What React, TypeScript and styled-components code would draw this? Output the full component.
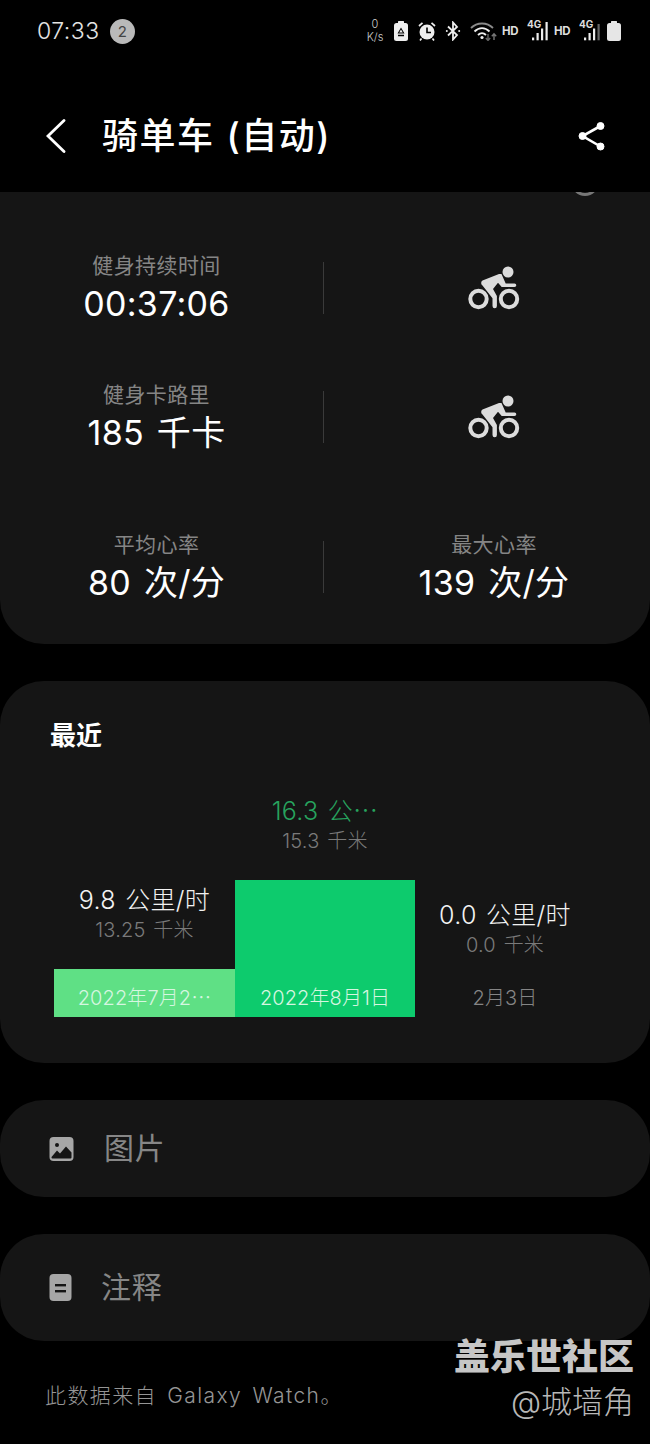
import React from "react";
import styled, { createGlobalStyle } from "styled-components";

const cardColor = "#151515";
const fontStack = `"Inter", "Noto Sans CJK SC", sans-serif`;

const GlobalStyle = createGlobalStyle`
  html, body {
    margin: 0;
    padding: 0;
    background: #000;
  }
  body {
    font-family: ${fontStack};
    color: #fff;
  }
`;

const Page = styled.div`
  position: relative;
  width: 650px;
  height: 1444px;
  overflow: hidden;
  background: #000;
`;

const StatusBar = styled.div`
  height: 60px;
  display: flex;
  align-items: center;
  justify-content: space-between;
  padding: 2px 29px 0 37px;
  box-sizing: border-box;
`;

const StatusLeft = styled.div`
  display: flex;
  align-items: center;
  gap: 10px;
`;

const Clock = styled.span`
  font-size: 23px;
  font-weight: 300;
  color: #e4e4e4;
  letter-spacing: 0.5px;
`;

const Badge = styled.span`
  width: 25px;
  height: 25px;
  border-radius: 50%;
  background: #b9b9b9;
  color: #444;
  font-size: 15px;
  display: flex;
  align-items: center;
  justify-content: center;
`;

const StatusRight = styled.div`
  display: flex;
  align-items: center;
  gap: 7px;
`;

const StatusItem = styled.span<{ $shift?: number }>`
  display: flex;
  align-items: center;
  margin-left: ${(p) => p.$shift ?? 0}px;
`;

const NetSpeed = styled.div`
  width: 20px;
  margin-right: 2px;
  font-size: 11px;
  line-height: 13.5px;
  font-weight: 300;
  text-align: center;
  color: #ccc;
`;

const Hd = styled.span`
  width: 17px;
  font-size: 11.5px;
  font-weight: 700;
  letter-spacing: -0.3px;
  color: #ddd;
`;

const SignalBox = styled.div`
  position: relative;
  width: 21px;
  height: 20px;
`;

const SignalLabel = styled.span`
  position: absolute;
  left: 0;
  top: -2px;
  font-size: 10px;
  line-height: 11px;
  font-weight: 700;
  color: #ddd;
`;

const Header = styled.div`
  height: 132px;
  box-sizing: border-box;
  padding: 19px 44px 0 46px;
  display: flex;
  align-items: center;
`;

const Title = styled.div`
  flex: 1;
  margin-left: 36px;
  font-size: 36px;
  line-height: 50px;
  font-weight: 500;
  letter-spacing: 1.5px;
  word-spacing: 1px;
`;

const StatsCard = styled.section`
  position: relative;
  overflow: hidden;
  background: ${cardColor};
  border-radius: 0 0 44px 44px;
  padding: 58px 0 43px;
  margin-bottom: 37px;
`;

const TopArc = styled.div`
  position: absolute;
  top: -24px;
  right: 51px;
  width: 28px;
  height: 28px;
  box-sizing: border-box;
  border: 3px solid #777;
  border-radius: 50%;
`;

const StatRow = styled.div<{ $gap: number }>`
  display: grid;
  grid-template-columns: 313px 25px 312px;
  align-items: center;
  height: 72px;
  margin-bottom: ${(p) => p.$gap}px;
`;

const Stat = styled.div`
  text-align: center;
`;

const StatLabel = styled.div`
  margin-top: 1px;
  font-size: 21px;
  line-height: 30px;
  letter-spacing: 0.4px;
  color: #858585;
`;

const StatValue = styled.div`
  margin-top: 3px;
  font-size: 34px;
  line-height: 40px;
  letter-spacing: 0.3px;
  word-spacing: 3px;
  color: #fff;
  white-space: nowrap;
`;

const Divider = styled.div`
  width: 1px;
  height: 52px;
  margin: 2px 0 0 10px;
  background: #3a3a3a;
`;

const IconCell = styled.div`
  display: flex;
  justify-content: center;
  margin-top: 2px;
`;

const RecentCard = styled.section`
  background: ${cardColor};
  border-radius: 44px;
  padding: 40px 55px 46px 54px;
  margin-bottom: 37px;
`;

const RecentTitle = styled.div`
  margin: 0 0 45px -4px;
  font-size: 26px;
  line-height: 30px;
  font-weight: 700;
`;

const Chart = styled.div`
  display: grid;
  grid-template-columns: 181px 180px 180px;
  align-items: end;
`;

const Column = styled.div`
  text-align: center;
  white-space: nowrap;
`;

const Speed = styled.div<{ $active?: boolean }>`
  font-size: 25px;
  line-height: 30px;
  font-weight: 300;
  letter-spacing: 0.3px;
  word-spacing: 2px;
  color: ${(p) => (p.$active ? "#27a35e" : "#f2f2f2")};
`;

const Distance = styled.div`
  font-size: 20px;
  line-height: 30px;
  font-weight: 300;
  letter-spacing: 0.2px;
  word-spacing: 2px;
  color: #7a7a7a;
`;

const Bar = styled.div<{ $height: number; $color: string }>`
  height: ${(p) => p.$height}px;
  margin-top: 24px;
  box-sizing: border-box;
  padding-bottom: 5px;
  background: ${(p) => p.$color};
  display: flex;
  align-items: flex-end;
  justify-content: center;
`;

const DateLabel = styled.span<{ $muted?: boolean }>`
  font-size: 20px;
  line-height: 28px;
  font-weight: 300;
  letter-spacing: 0.1px;
  color: ${(p) => (p.$muted ? "#858585" : "#d6f6e0")};
`;

const Pill = styled.section<{ $height: number; $iconGap: number }>`
  height: ${(p) => p.$height}px;
  box-sizing: border-box;
  background: ${cardColor};
  border-radius: 44px;
  margin-bottom: 37px;
  padding-left: 49px;
  display: flex;
  align-items: center;
  gap: ${(p) => p.$iconGap}px;
`;

const PillText = styled.span`
  font-size: 30px;
  line-height: 40px;
  margin-top: -2px;
  color: #868686;
  letter-spacing: 0.8px;
`;

const Footer = styled.div`
  margin-top: 40px;
  padding-left: 45px;
  font-size: 21px;
  line-height: 30px;
  font-weight: 300;
  letter-spacing: 1.4px;
  word-spacing: 3px;
  color: #959595;
`;

const Watermark = styled.div`
  position: absolute;
  right: 16px;
  top: 1335px;
  text-align: right;
  pointer-events: none;
`;

const WatermarkName = styled.div`
  font-size: 36px;
  line-height: 44px;
  font-weight: 900;
  color: #c6c6c6;
`;

const WatermarkUser = styled.div`
  font-size: 31px;
  line-height: 46px;
  font-weight: 300;
  color: #b8b8b8;
`;

const BikeIcon = () => (
  <svg width="52" height="44" viewBox="0 0 52 44" fill="#dcdcdc">
    <circle cx="40" cy="6" r="5.5" />
    <circle cx="10.5" cy="33" r="8.2" fill="none" stroke="#dcdcdc" strokeWidth="4" />
    <circle cx="41" cy="33" r="8.2" fill="none" stroke="#dcdcdc" strokeWidth="4" />
    <path
      d="M14.5 14.5 31 8 33.5 8 37.7 17.5H46.5a1.8 1.8 0 0 1 0 3.6H33.7L30 16.7 25 23 28.9 30V40a2.2 2.2 0 0 1-4.4 0V32.3L14.5 19.5a3 3 0 0 1 0-5Z"
      strokeLinejoin="round"
    />
  </svg>
);

const BackIcon = () => (
  <svg width="20" height="34" viewBox="0 0 20 34" fill="none" stroke="#fff" strokeWidth="2.8" strokeLinecap="round">
    <path d="M18 1.5 2 17 18 32.5" />
  </svg>
);

const ShareIcon = () => (
  <svg width="28" height="30" viewBox="0 0 28 30" fill="#fff" stroke="#fff">
    <circle cx="22.5" cy="5" r="3.5" />
    <circle cx="4.5" cy="15" r="3.5" />
    <circle cx="22.5" cy="25.5" r="3.5" />
    <path d="M22.5 5 4.5 15 22.5 25.5" fill="none" strokeWidth="2.6" />
  </svg>
);

const ImageIcon = () => (
  <svg width="25" height="24" viewBox="0 0 25 24">
    <rect x="0.5" width="24" height="24" rx="4" fill="#a6a6a6" />
    <circle cx="8" cy="8" r="2" fill="#151515" />
    <path d="M2.5 20 8 13.5 11 16.5 17 9.5 22.5 15.5V20.5a1 1 0 0 1-1 1H3.5a1 1 0 0 1-1-1Z" fill="#151515" />
  </svg>
);

const NoteIcon = () => (
  <svg width="23" height="27" viewBox="0 0 23 27">
    <rect width="22" height="27" x="0.5" rx="4" fill="#a6a6a6" />
    <rect x="6" y="10" width="11" height="2.4" fill="#151515" />
    <rect x="6" y="16" width="11" height="2.4" fill="#151515" />
  </svg>
);

const RecycleBatteryIcon = () => (
  <svg width="14" height="20" viewBox="0 0 14 20" fill="#eee">
    <rect x="4" width="6" height="2.5" rx="0.5" />
    <rect y="2" width="14" height="18" rx="2.5" />
    <path d="M7 6.5 10.5 12.5H3.5Z M7 8.5 5.2 11.5H8.8Z" fill="#000" fillRule="evenodd" />
    <path d="M4 14.5H10" stroke="#000" strokeWidth="1.5" />
  </svg>
);

const AlarmIcon = () => (
  <svg width="18" height="20" viewBox="0 0 18 20" fill="none">
    <circle cx="9" cy="11" r="7.5" fill="#eee" />
    <path d="M9 6.5V11.5H13" stroke="#000" strokeWidth="1.6" />
    <path d="M1 5 4.5 1.8M17 5 13.5 1.8M3.5 17.5 2 19.5M14.5 17.5 16 19.5" stroke="#eee" strokeWidth="1.7" />
  </svg>
);

const BluetoothIcon = () => (
  <svg width="16" height="20" viewBox="0 0 16 20" fill="none" stroke="#eee" strokeWidth="1.8">
    <path d="M3 5.5 12 14 8 18.5V1.5L12 6 3 14.5" />
    <circle cx="1.8" cy="10" r="1" fill="#eee" stroke="none" />
    <circle cx="14.2" cy="10" r="1" fill="#eee" stroke="none" />
  </svg>
);

const WifiIcon = () => (
  <svg width="27" height="20" viewBox="0 0 27 20" fill="none">
    <path d="M1 7C7 1 17 1 23 7" stroke="#8a8a8a" strokeWidth="1.8" />
    <path d="M4.5 10.5C9 6 15 6 19.5 10.5" stroke="#eee" strokeWidth="1.8" />
    <path d="M8 14C10.5 11.5 13.5 11.5 16 14" stroke="#eee" strokeWidth="1.8" />
    <circle cx="12" cy="16.5" r="1.6" fill="#eee" />
    <path d="M18 13V19M15.8 17 18 19.5 20.2 17" stroke="#666" strokeWidth="1.4" />
    <path d="M24 19V13M21.8 15.2 24 12.8 26.2 15.2" stroke="#777" strokeWidth="1.4" />
  </svg>
);

const SignalIcon = ({ weak }: { weak?: boolean }) => (
  <svg width="21" height="20" viewBox="0 0 21 20" style={{ position: "absolute", left: 0, top: 0 }}>
    <rect x="5" y="16.5" width="2.2" height="2.8" fill="#eee" />
    <rect x="9.5" y="12" width="2.2" height="7.3" fill="#eee" />
    <rect x="14" y="7.5" width="2.2" height="11.8" fill="#eee" />
    <rect x="18.5" y={weak ? 3 : 1} width="2.2" height={weak ? 16.3 : 18.3} fill={weak ? "#666" : "#eee"} />
  </svg>
);

const BatteryIcon = () => (
  <svg width="14" height="20" viewBox="0 0 14 20" fill="#e6e6e6">
    <rect x="4" width="6" height="2.5" rx="0.5" />
    <rect y="2" width="14" height="18" rx="2.5" />
  </svg>
);

const stats = [
  { label: "平均心率", value: "80 次/分" },
  { label: "最大心率", value: "139 次/分" },
];

const App = () => {
  return (
    <Page>
      <GlobalStyle />
      <StatusBar>
        <StatusLeft>
          <Clock>07:33</Clock>
          <Badge>2</Badge>
        </StatusLeft>
        <StatusRight>
          <NetSpeed>
            0<br />K/s
          </NetSpeed>
          <StatusItem>
            <RecycleBatteryIcon />
          </StatusItem>
          <StatusItem $shift={3}>
            <AlarmIcon />
          </StatusItem>
          <StatusItem $shift={2}>
            <BluetoothIcon />
          </StatusItem>
          <StatusItem $shift={2}>
            <WifiIcon />
          </StatusItem>
          <StatusItem $shift={-2}>
            <Hd>HD</Hd>
          </StatusItem>
          <StatusItem $shift={1}>
            <SignalBox>
              <SignalIcon />
              <SignalLabel>4G</SignalLabel>
            </SignalBox>
          </StatusItem>
          <StatusItem $shift={-1}>
            <Hd>HD</Hd>
          </StatusItem>
          <StatusItem $shift={1}>
            <SignalBox>
              <SignalIcon weak />
              <SignalLabel>4G</SignalLabel>
            </SignalBox>
          </StatusItem>
          <StatusItem>
            <BatteryIcon />
          </StatusItem>
        </StatusRight>
      </StatusBar>

      <Header>
        <BackIcon />
        <Title>骑单车 (自动)</Title>
        <ShareIcon />
      </Header>

      <StatsCard>
        <TopArc />
        <StatRow $gap={57}>
          <Stat>
            <StatLabel>健身持续时间</StatLabel>
            <StatValue>00:37:06</StatValue>
          </Stat>
          <Divider />
          <IconCell>
            <BikeIcon />
          </IconCell>
        </StatRow>
        <StatRow $gap={78}>
          <Stat>
            <StatLabel>健身卡路里</StatLabel>
            <StatValue>185 千卡</StatValue>
          </Stat>
          <Divider />
          <IconCell>
            <BikeIcon />
          </IconCell>
        </StatRow>
        <StatRow $gap={0}>
          <Stat>
            <StatLabel>{stats[0].label}</StatLabel>
            <StatValue>{stats[0].value}</StatValue>
          </Stat>
          <Divider />
          <Stat>
            <StatLabel>{stats[1].label}</StatLabel>
            <StatValue>{stats[1].value}</StatValue>
          </Stat>
        </StatRow>
      </StatsCard>

      <RecentCard>
        <RecentTitle>最近</RecentTitle>
        <Chart>
          <Column>
            <Speed>9.8 公里/时</Speed>
            <Distance>13.25 千米</Distance>
            <Bar $height={48} $color="#5fe085">
              <DateLabel>2022年7月2⋯</DateLabel>
            </Bar>
          </Column>
          <Column>
            <Speed $active>16.3 公⋯</Speed>
            <Distance>15.3 千米</Distance>
            <Bar $height={137} $color="#0dcb6d">
              <DateLabel>2022年8月1日</DateLabel>
            </Bar>
          </Column>
          <Column>
            <Speed>0.0 公里/时</Speed>
            <Distance>0.0 千米</Distance>
            <Bar $height={33} $color="transparent">
              <DateLabel $muted>2月3日</DateLabel>
            </Bar>
          </Column>
        </Chart>
      </RecentCard>

      <Pill $height={97} $iconGap={30}>
        <ImageIcon />
        <PillText>图片</PillText>
      </Pill>
      <Pill $height={107} $iconGap={29}>
        <NoteIcon />
        <PillText>注释</PillText>
      </Pill>

      <Footer>此数据来自 Galaxy Watch。</Footer>

      <Watermark>
        <WatermarkName>盖乐世社区</WatermarkName>
        <WatermarkUser>@城墙角</WatermarkUser>
      </Watermark>
    </Page>
  );
};

export default App;
